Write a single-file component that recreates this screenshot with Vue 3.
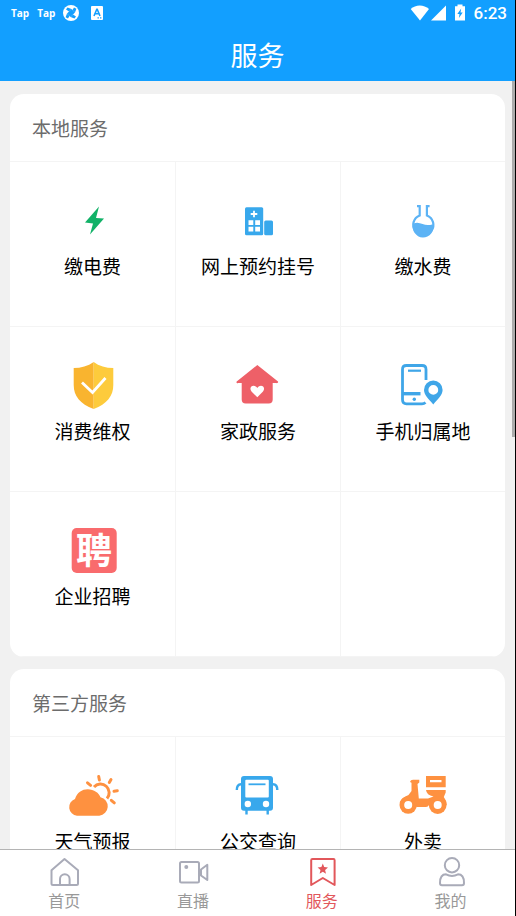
<script setup>
import { ref } from 'vue'

const sections = [
  {
    title: '本地服务',
    items: [
      { icon: 'power', label: '缴电费' },
      { icon: 'hospital', label: '网上预约挂号' },
      { icon: 'water', label: '缴水费' },
      { icon: 'shield', label: '消费维权' },
      { icon: 'house', label: '家政服务' },
      { icon: 'phone', label: '手机归属地' },
      { icon: 'jobs', label: '企业招聘' },
      { icon: '', label: '' },
      { icon: '', label: '' },
    ],
  },
  {
    title: '第三方服务',
    items: [
      { icon: 'weather', label: '天气预报' },
      { icon: 'bus', label: '公交查询' },
      { icon: 'scooter', label: '外卖' },
    ],
  },
]

const tabs = [
  { id: 'home', label: '首页' },
  { id: 'live', label: '直播' },
  { id: 'service', label: '服务' },
  { id: 'mine', label: '我的' },
]
const active = ref('service')
</script>

<template>
  <div class="app">
    <header class="top">
      <div class="status">
        <div class="notices">
          <span class="tap">Tap</span>
          <span class="tap">Tap</span>
          <svg class="globe" width="16" height="16" viewBox="0 0 16 16">
            <circle cx="8" cy="8" r="8" fill="#fff" />
            <path d="M8.5 4 12 7.500 7.500 12 4 8.500Z" fill="#129fff" />
            <path d="M8.500 4 4.500 2.600 3 4.500 6 6.500ZM12 7.500 13.400 3.700 11 2.500 9.500 5ZM7.500 12 11.500 13.400 13 11.500 10 9.500ZM4 8.500 2.600 12.300 5 13.500 6.500 11Z" fill="#129fff" />
          </svg>
          <svg width="12" height="14" viewBox="0 0 12 14">
            <rect width="12" height="14" rx="1" fill="#fff" />
            <path d="M3 10 5.8 3.2H6.2L9 10M4 7.8H8" fill="none" stroke="#129fff" stroke-width="1.6" />
            <path d="M6.5 11.8h1.4M9 11.8h1.4" stroke="#129fff" stroke-width="1.2" />
          </svg>
        </div>
        <div class="system">
          <svg width="56" height="18" viewBox="0 0 56 18" fill="#fff">
            <path d="M0.7 5C5.5 .2 14 .2 19 5L10 16.5Z" />
            <path d="M21 16.5 36 1.5V16.5Z" />
            <path d="M47.5 .5h5v1.8h2.5v14.2h-10V2.3h2.5Z" />
            <path d="M51.2 4.5 47.3 10h2.2l-.6 4 3.8-5.5h-2.2Z" fill="#129fff" />
          </svg>
          <time class="clock">6:23</time>
        </div>
      </div>
      <h1 class="title">服务</h1>
    </header>

    <div class="body">
      <main class="scroll">
        <section v-for="section in sections" :key="section.title" class="card">
          <h2 class="card-title">{{ section.title }}</h2>
          <div class="grid">
            <component
              :is="item.label ? 'a' : 'div'"
              v-for="(item, i) in section.items"
              :key="i"
              class="cell"
              :href="item.label ? '#' + item.icon : null"
            >
              <svg v-if="item.icon" class="icon" viewBox="0 0 50 50" aria-hidden="true">
                <path v-if="item.icon === 'power'" d="M31 10.5 17 26.4 25 27.5 22 38.5 36 22.5 28 22Z" fill="#12b268" />
                <g v-else-if="item.icon === 'hospital'" transform="translate(-1 0)">
                  <rect x="13" y="11.3" width="18.2" height="28" rx="1.5" fill="#38a8ec" />
                  <rect x="32.2" y="24.6" width="8.8" height="14.7" rx="1.5" fill="#38a8ec" />
                  <path d="M22 14.7v6.6M18.7 18h6.6" stroke="#fff" stroke-width="1.8" />
                  <path d="M16.5 24.2h4.8v4.8h-4.8ZM23.2 24.2h4.8v4.8h-4.8ZM16.5 30.8h4.8v4.8h-4.8ZM23.2 30.8h4.8v4.8h-4.8Z" fill="#fff" />
                </g>
                <g v-else-if="item.icon === 'water'">
                  <path d="M19 10.2h2.7V19.5A10.1 10.1 0 1 0 28.9 19.5V10.2h2.7" fill="none" stroke="#5cb3f5" stroke-width="2.2" />
                  <path d="M15.6 27.5c3-1.5 6-.8 9 .5s6.5 1.500 10.2.2a10.2 10.2 0 1 1-19.2-.7Z" fill="#5cb3f5" />
                </g>
                <g v-else-if="item.icon === 'shield'">
                  <path d="M25.7 1C20 5 13 7 5.7 7V24C5.7 35 12 43 25.7 48Z" fill="#f9b42f" />
                  <path d="M25.7 1C31 5 38 7 45.3 7V24C45.3 35 39 43 25.7 48Z" fill="#fdcb3c" />
                  <path d="M14 21.5 24.5 31.5 37.5 17" fill="none" stroke="#fff" stroke-width="2.8" />
                </g>
                <g v-else-if="item.icon === 'house'" fill="#ee6068" transform="translate(-1 0)">
                  <path d="M25.3 4 46 20.5C46.5 21.5 45.5 22.5 44 22H40.7V38.5A4 4 0 0 1 36.7 42.5H13.7A4 4 0 0 1 9.7 38.5V22H6.5C5 22.5 4 21.5 4.7 20.5Z" />
                  <path d="M25.3 36.3 19.5 30.5C16 26 22 22 25.3 27 28.5 22 34.500 26 31 30.5Z" fill="#fff" />
                </g>
                <g v-else-if="item.icon === 'phone'" fill="none" stroke="#3fa6e8" stroke-width="2.8">
                  <path d="M28 19V8.5Q28 4.5 24 4.5H8.5Q4.5 4.5 4.5 8.5V38.5Q4.5 42.8 8.5 42.8H24Q26 42.8 27.5 41.5" />
                  <path d="M10 9.7H23" stroke-width="2.2" />
                  <path d="M4.5 32.7H22.5" stroke-width="3.4" />
                  <circle cx="16.3" cy="38.3" r="1.7" fill="#3fa6e8" stroke="none" />
                  <path d="M35.3 19.6A9.3 9.3 0 0 1 44.6 28.9C44.6 34 39.5 38 35.3 43.5 31 38 26 34 26 28.9A9.3 9.3 0 0 1 35.3 19.6ZM35.3 24A4.9 4.9 0 1 0 35.3 33.8 4.9 4.9 0 1 0 35.3 24Z" fill="#3fa6e8" fill-rule="evenodd" stroke="none" />
                </g>
                <g v-else-if="item.icon === 'jobs'">
                  <rect x="3.7" y="2" width="45" height="45" rx="5" fill="#f96b6d" />
                  <text x="26" y="38" text-anchor="middle" class="glyph">聘</text>
                </g>
                <g v-else-if="item.icon === 'weather'">
                  <path d="M26 16A8.5 8.5 0 1 1 39 27.5" fill="none" stroke="#fe9140" stroke-width="3" />
                  <path d="M30.7 5.5 31.4 9M43 8.5 41.3 11.5M49.3 19.8 46 20.2M46.3 31.8 43.3 29.3M19.5 11.8 22.6 14.3" stroke="#fe9140" stroke-width="3" stroke-linecap="round" />
                  <path d="M9 44.7A8.6 8.6 0 0 1 7 28C9 21.5 14 18.2 19.7 18.2 26 18.2 31 22 32.5 26.2A9.4 9.4 0 0 1 31.3 44.7Z" fill="#fe9140" />
                </g>
                <g v-else-if="item.icon === 'bus'" transform="translate(-1 0)">
                  <rect x="9" y="5" width="32" height="34.8" rx="3" fill="#38a8ec" />
                  <rect x="13.3" y="8.8" width="23.5" height="17.8" rx="1" fill="#fff" />
                  <path d="M16.5 13.3H33.5" stroke="#38a8ec" stroke-width="1.8" />
                  <circle cx="15.8" cy="33" r="3.2" fill="#fff" />
                  <circle cx="34" cy="33" r="3.2" fill="#fff" />
                  <path d="M14.5 39V43.5M35.7 39V43.5M9 13.2Q4.8 13.2 4.8 19M41 13.2Q45.3 13.2 45.3 19" fill="none" stroke="#38a8ec" stroke-width="2.4" />
                </g>
                <g v-else-if="item.icon === 'scooter'" fill="#fe9140">
                  <path d="M28 5H47.7V16.3H28ZM32 9V11.3H43.5V9Z" fill-rule="evenodd" />
                  <path d="M12 11Q12.5 8.8 15 8.8H21.3V11.5L19.5 13 20.8 27.5H30L35.5 25.5Q28.5 24 28 19H47.7V21.5L45.8 26Q48.7 29.5 48.7 34H31Q30 36 28 36H19L10 34 2 31Q3.5 26.5 10.5 24L13.5 20V11.8Z" />
                  <circle cx="10.2" cy="34" r="8.7" />
                  <circle cx="39.7" cy="34" r="8.9" />
                  <circle cx="10.2" cy="34" r="4" fill="#fff" />
                  <circle cx="39.7" cy="34" r="4" fill="#fff" />
                </g>
              </svg>
              <span v-if="item.label" class="label">{{ item.label }}</span>
            </component>
          </div>
        </section>
      </main>
      <div class="thumb"></div>
    </div>

    <nav class="tabs">
      <a
        v-for="tab in tabs"
        :key="tab.id"
        class="tab"
        :class="{ active: active === tab.id }"
        :href="'#' + tab.id"
        @click="active = tab.id"
      >
        <svg class="tab-icon" viewBox="0 0 32 32" aria-hidden="true">
          <g v-if="tab.id === 'home'">
            <path d="M16.5 3 30 14.2V27.5Q30 29 28.5 29H5Q3.5 29 3.5 27.5V14.2Z" />
            <path d="M12 29V23A4.8 4.8 0 0 1 21.6 23V29" />
          </g>
          <g v-else-if="tab.id === 'live'">
            <rect x="3" y="6" width="19" height="20.5" rx="1.5" />
            <circle cx="9.3" cy="11" r="1" />
            <path d="M24 13.5 30.3 8.8V24L24 19.5Z" />
          </g>
          <g v-else-if="tab.id === 'service'">
            <path d="M6.5 3H27.5Q28.6 3 28.6 4.2V29L16.8 22 5.2 29V4.2Q5.2 3 6.5 3Z" />
            <path class="solid" d="M16.8 7.5 18.2 11.1 22 11.4 19.1 13.9 20 17.8 16.8 15.7 13.6 17.8 14.5 13.9 11.6 11.4 15.4 11.1Z" />
          </g>
          <g v-else>
            <circle cx="17" cy="9.2" r="7.2" />
            <path d="M11 18.3Q17 21.5 23 18.3C27 18.3 29 21.5 29 27Q29 29.2 27 29.2H7Q5 29.2 5 27C5 21.5 7 18.3 11 18.3Z" />
          </g>
        </svg>
        <span class="tab-label">{{ tab.label }}</span>
      </a>
    </nav>
  </div>
</template>

<style>
body {
  margin: 0;
}
</style>

<style scoped>
.app {
  box-sizing: border-box;
  display: flex;
  flex-direction: column;
  height: 100vh;
  border-right: 1px solid #000;
  background: #f1f1f1;
  color: #000;
  font-family: Roboto, "Noto Sans CJK SC", sans-serif;
}
.top {
  flex: none;
  background: #129fff;
  color: #fff;
}
.status {
  display: flex;
  align-items: center;
  justify-content: space-between;
  height: 26px;
  padding: 0 8px 0 11px;
}
.notices,
.system {
  display: flex;
  align-items: center;
  gap: 8px;
}
.tap {
  font: bold 10px/16px "Open Sans", sans-serif;
}
.globe {
  margin-right: 4px;
}
.clock {
  font-size: 17px;
  font-weight: 500;
  line-height: 24px;
}
.title {
  margin: 0;
  padding: 11px 0 4px;
  font-size: 27px;
  font-weight: 400;
  line-height: 40px;
  text-align: center;
}
.body {
  position: relative;
  flex: 1;
  min-height: 0;
}
.scroll {
  box-sizing: border-box;
  display: flex;
  flex-direction: column;
  gap: 12px;
  height: 100%;
  padding: 13px 10px;
  overflow-y: auto;
  scrollbar-width: none;
}
.thumb {
  position: absolute;
  top: 0;
  right: 0;
  width: 3px;
  height: 356px;
  background: #acacac;
}
.card {
  flex: none;
  border-radius: 14px;
  background: #fff;
  overflow: hidden;
}
.card-title {
  margin: 0;
  padding: 22px 22px 17px;
  border-bottom: 1px solid #f4f4f4;
  color: #6c6c6c;
  font-size: 19px;
  font-weight: 400;
  line-height: 28px;
}
.grid {
  display: grid;
  grid-template-columns: repeat(3, 1fr);
}
.cell {
  box-sizing: border-box;
  display: flex;
  flex-direction: column;
  align-items: center;
  gap: 9px;
  height: 165px;
  padding-top: 34px;
  border-left: 1px solid #f4f4f4;
  border-bottom: 1px solid #f4f4f4;
  color: #000;
  text-decoration: none;
}
.cell:nth-child(3n + 1) {
  border-left: 0;
}
.icon {
  width: 50px;
  height: 50px;
  overflow: visible;
}
.glyph {
  fill: #fff;
  font-size: 36px;
  font-weight: 700;
}
.label {
  font-size: 19px;
  line-height: 26px;
}
.tabs {
  display: flex;
  flex: none;
  border-top: 1px solid #b4b4b4;
  background: #fff;
}
.tab {
  display: flex;
  flex: 1;
  flex-direction: column;
  align-items: center;
  gap: 3px;
  padding: 6px 0 3px;
  color: #999;
  text-decoration: none;
}
.tab-icon {
  width: 32px;
  height: 32px;
  fill: none;
  stroke: #a9abb8;
  stroke-width: 2;
  stroke-linejoin: round;
}
.tab-label {
  font-size: 16px;
  line-height: 22px;
}
.tab.active {
  color: #e2575b;
}
.active .tab-icon {
  stroke: #e2575b;
}
.tab-icon .solid {
  fill: #e2575b;
  stroke: none;
}
</style>
